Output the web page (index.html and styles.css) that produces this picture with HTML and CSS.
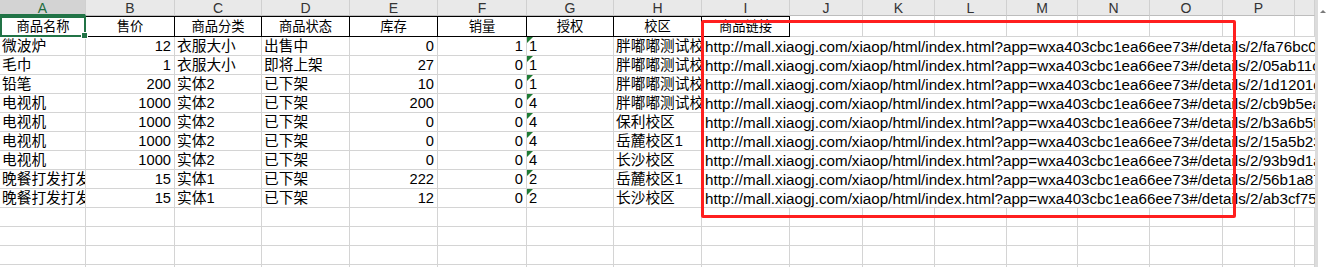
FILE: index.html
```html
<!DOCTYPE html>
<html lang="zh-CN">
<head>
<meta charset="utf-8">
<title>Sheet</title>
<link rel="stylesheet" href="styles.css">
</head>
<body>
<div class="window">
  <div class="sheet">
    <div class="grid">
      <div class="ch sel">A</div><div class="ch">B</div><div class="ch">C</div><div class="ch">D</div><div class="ch">E</div><div class="ch">F</div><div class="ch">G</div><div class="ch">H</div><div class="ch">I</div><div class="ch">J</div><div class="ch">K</div><div class="ch">L</div><div class="ch">M</div><div class="ch">N</div><div class="ch">O</div><div class="ch">P</div><div class="ch"></div>

      <div class="h1 active">商品名称</div><div class="h1">售价</div><div class="h1">商品分类</div><div class="h1">商品状态</div><div class="h1">库存</div><div class="h1">销量</div><div class="h1">授权</div><div class="h1">校区</div><div class="h1">商品链接</div><div class="h1e"></div><div class="h1e"></div><div class="h1e"></div><div class="h1e"></div><div class="h1e"></div><div class="h1e"></div><div class="h1e"></div><div class="h1e"></div>

      <div class="c">微波炉</div><div class="c num">12</div><div class="c">衣服大小</div><div class="c">出售中</div><div class="c num">0</div><div class="c num">1</div><div class="c txtnum">1</div><div class="c">胖嘟嘟测试校区</div><div class="c url">http://mall.xiaogj.com/xiaop/html/index.html?app=wxa403cbc1ea66ee73#/details/2/fa76bc0a9e31</div>
      <div class="c">毛巾</div><div class="c num">1</div><div class="c">衣服大小</div><div class="c">即将上架</div><div class="c num">27</div><div class="c num">0</div><div class="c txtnum">1</div><div class="c">胖嘟嘟测试校区</div><div class="c url">http://mall.xiaogj.com/xiaop/html/index.html?app=wxa403cbc1ea66ee73#/details/2/05ab11c4d2e8</div>
      <div class="c">铅笔</div><div class="c num">200</div><div class="c">实体2</div><div class="c">已下架</div><div class="c num">10</div><div class="c num">0</div><div class="c txtnum">1</div><div class="c">胖嘟嘟测试校区</div><div class="c url">http://mall.xiaogj.com/xiaop/html/index.html?app=wxa403cbc1ea66ee73#/details/2/1d1201d7f0b2</div>
      <div class="c">电视机</div><div class="c num">1000</div><div class="c">实体2</div><div class="c">已下架</div><div class="c num">200</div><div class="c num">0</div><div class="c txtnum">4</div><div class="c">胖嘟嘟测试校区</div><div class="c url">http://mall.xiaogj.com/xiaop/html/index.html?app=wxa403cbc1ea66ee73#/details/2/cb9b5ea1c7d4</div>
      <div class="c">电视机</div><div class="c num">1000</div><div class="c">实体2</div><div class="c">已下架</div><div class="c num">0</div><div class="c num">0</div><div class="c txtnum">4</div><div class="c">保利校区</div><div class="c url">http://mall.xiaogj.com/xiaop/html/index.html?app=wxa403cbc1ea66ee73#/details/2/b3a6b5f8e2a1</div>
      <div class="c">电视机</div><div class="c num">1000</div><div class="c">实体2</div><div class="c">已下架</div><div class="c num">0</div><div class="c num">0</div><div class="c txtnum">4</div><div class="c">岳麓校区1</div><div class="c url">http://mall.xiaogj.com/xiaop/html/index.html?app=wxa403cbc1ea66ee73#/details/2/15a5b23c9d0e</div>
      <div class="c">电视机</div><div class="c num">1000</div><div class="c">实体2</div><div class="c">已下架</div><div class="c num">0</div><div class="c num">0</div><div class="c txtnum">4</div><div class="c">长沙校区</div><div class="c url">http://mall.xiaogj.com/xiaop/html/index.html?app=wxa403cbc1ea66ee73#/details/2/93b9d1a6b4f7</div>
      <div class="c">晚餐打发打发</div><div class="c num">15</div><div class="c">实体1</div><div class="c">已下架</div><div class="c num">222</div><div class="c num">0</div><div class="c txtnum">2</div><div class="c">岳麓校区1</div><div class="c url">http://mall.xiaogj.com/xiaop/html/index.html?app=wxa403cbc1ea66ee73#/details/2/56b1a87e2c30</div>
      <div class="c">晚餐打发打发</div><div class="c num">15</div><div class="c">实体1</div><div class="c">已下架</div><div class="c num">12</div><div class="c num">0</div><div class="c txtnum">2</div><div class="c">长沙校区</div><div class="c url">http://mall.xiaogj.com/xiaop/html/index.html?app=wxa403cbc1ea66ee73#/details/2/ab3cf75d1e94</div>

      <div class="c"></div><div class="c"></div><div class="c"></div><div class="c"></div><div class="c"></div><div class="c"></div><div class="c"></div><div class="c"></div><div class="c"></div><div class="c"></div><div class="c"></div><div class="c"></div><div class="c"></div><div class="c"></div><div class="c"></div><div class="c"></div><div class="c"></div>
      <div class="c"></div><div class="c"></div><div class="c"></div><div class="c"></div><div class="c"></div><div class="c"></div><div class="c"></div><div class="c"></div><div class="c"></div><div class="c"></div><div class="c"></div><div class="c"></div><div class="c"></div><div class="c"></div><div class="c"></div><div class="c"></div><div class="c"></div>
      <div class="c"></div><div class="c"></div><div class="c"></div><div class="c"></div><div class="c"></div><div class="c"></div><div class="c"></div><div class="c"></div><div class="c"></div><div class="c"></div><div class="c"></div><div class="c"></div><div class="c"></div><div class="c"></div><div class="c"></div><div class="c"></div><div class="c"></div>
      <div class="c"></div><div class="c"></div><div class="c"></div><div class="c"></div><div class="c"></div><div class="c"></div><div class="c"></div><div class="c"></div><div class="c"></div><div class="c"></div><div class="c"></div><div class="c"></div><div class="c"></div><div class="c"></div><div class="c"></div><div class="c"></div><div class="c"></div>
    </div>
    <div class="annot"></div>
  </div>
  <div class="vscroll"><span class="arrow"></span></div>
</div>
</body>
</html>
```

FILE: styles.css
```css
html, body {
  margin: 0;
  padding: 0;
  background: #ffffff;
}
body {
  width: 1326px;
  height: 267px;
  overflow: hidden;
  font-family: "Liberation Sans", "Noto Sans CJK SC", sans-serif;
  color: #000;
}
.window {
  display: flex;
  width: 1326px;
  height: 267px;
  overflow: hidden;
}
.sheet {
  position: relative;
  width: 1315px;
  flex: none;
  overflow: hidden;
}
.grid {
  display: grid;
  grid-template-columns: 86px 89px 87px 88px 88px 89px 87px 88px 88px 73px 72px 72px 71px 72px 73px 72px 20px;
  grid-template-rows: 16px 21px;
  grid-auto-rows: 19px;
}
.grid > div {
  box-sizing: border-box;
  white-space: nowrap;
  overflow: hidden;
}
.ch {
  background: #e9e9e9;
  border-right: 1px solid #d0d0d0;
  border-bottom: 1px solid #bdbdbd;
  font-size: 14px;
  line-height: 16px;
  text-align: center;
  color: #333;
}
.ch.sel {
  background: #d3d3d3;
  color: #1e6b3e;
  border-bottom: 2px solid #217346;
}
.h1 {
  border-top: 1px solid #000;
  border-right: 1px solid #000;
  border-bottom: 1px solid #000;
  font-size: 13.3px;
  line-height: 19px;
  text-align: center;
  position: relative;
}
.h1e {
  border-right: 1px solid #d4d4d4;
  border-bottom: 1px solid #d4d4d4;
}
.h1.active {
  border: 2px solid #217346;
  line-height: 17px;
  overflow: visible !important;
  z-index: 2;
}
.h1.active::after {
  content: "";
  position: absolute;
  right: -4px;
  bottom: -4px;
  width: 5px;
  height: 5px;
  background: #217346;
  border: 1px solid #fff;
}
.c {
  border-right: 1px solid #d4d4d4;
  border-bottom: 1px solid #d4d4d4;
  font-size: 14.7px;
  line-height: 19px;
  padding: 0 2px;
  position: relative;
}
.num {
  text-align: right;
  padding-right: 3px;
}
.txtnum::before {
  content: "";
  position: absolute;
  left: 0;
  top: 0;
  width: 0;
  height: 0;
  border-top: 6px solid #1e7b34;
  border-right: 6px solid transparent;
}
.url {
  grid-column: span 9;
  border-right: none !important;
  padding-left: 3px;
  font-size: 15.2px;
}
.annot {
  position: absolute;
  left: 701px;
  top: 20px;
  width: 535px;
  height: 198px;
  box-sizing: border-box;
  border: 3px solid #ff1f1f;
  border-radius: 2px;
  pointer-events: none;
}
.vscroll {
  flex: 1;
  border-left: 3px solid #dcdcdc;
  background: #fff;
  position: relative;
}
.arrow {
  position: absolute;
  left: 2px;
  top: 10px;
  width: 0;
  height: 0;
  border-left: 3px solid transparent;
  border-right: 3px solid transparent;
  border-bottom: 3px solid #7a7a7a;
}
```
